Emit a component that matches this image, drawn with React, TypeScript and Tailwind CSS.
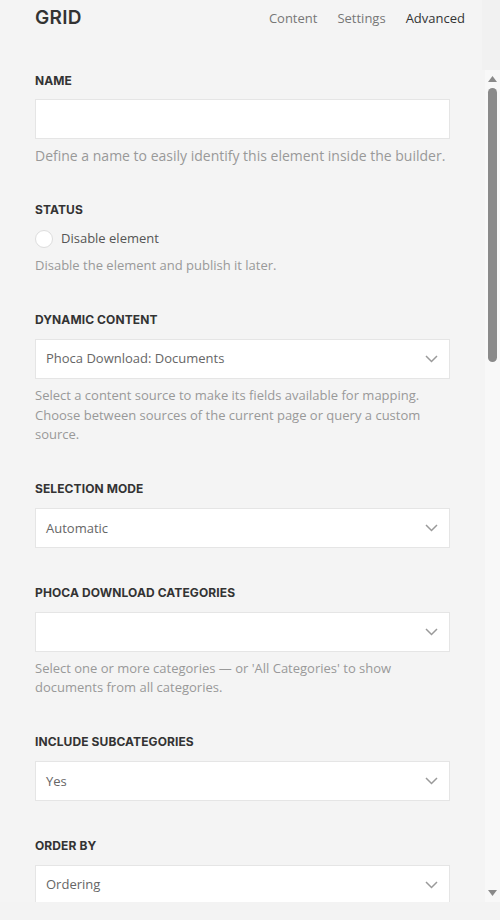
import React from "react";

const labelCls =
  "font-['Inter','Liberation_Sans',sans-serif] font-bold text-[12px] leading-[20px] uppercase text-[#333] tracking-[0.1px]";
const helpCls = "mt-[7px] text-[13px] leading-[19.5px] text-[#999] whitespace-nowrap";

function Chevron() {
  return (
    <svg width="13" height="8" viewBox="0 0 13 8" fill="none">
      <path d="M1 1l5.5 5.5L12 1" stroke="#9a9a9a" strokeWidth="1.5" />
    </svg>
  );
}

function Select({ value }: { value?: string }) {
  return (
    <div className="mt-[9px] h-[40px] w-[415px] bg-white border border-[#e5e5e5] flex items-center justify-between pl-[10px] pr-[11px] shrink-0">
      <span className="text-[13px] text-[#666]">{value}</span>
      <Chevron />
    </div>
  );
}

function Section({ label, children }: { label: string; children: React.ReactNode }) {
  return (
    <div className="flex flex-col shrink-0">
      <div className={labelCls}>{label}</div>
      {children}
    </div>
  );
}

export default function App() {
  return (
    <div className="w-[500px] h-[920px] bg-[#f4f4f4] flex flex-col overflow-hidden font-['Open_Sans','Liberation_Sans',sans-serif]">
      {/* header */}
      <div className="h-[70px] flex shrink-0">
        <div className="w-[482px] h-[37px] flex items-center justify-between pl-[35px] pr-[17px]">
          <h1 className="font-['Inter','Liberation_Sans',sans-serif] font-semibold text-[19px] text-[#333] tracking-[0.3px]">
            GRID
          </h1>
          <nav className="flex gap-[20px] text-[13px]">
            <span className="text-[#777]">Content</span>
            <span className="text-[#777]">Settings</span>
            <span className="text-[#333]">Advanced</span>
          </nav>
        </div>
        <div className="flex-1 bg-[#f1f1f1]" />
      </div>

      {/* body */}
      <div className="h-[832px] flex shrink-0">
        <div className="w-[485px] overflow-hidden pl-[35px] pt-[0.5px] flex flex-col gap-[34.6px]">
          <Section label="Name">
            <div className="mt-[8.5px] h-[40px] w-[415px] bg-white border border-[#e5e5e5] shrink-0" />
            <p className="mt-[7px] text-[14px] leading-[19.5px] text-[#999] whitespace-nowrap">
              Define a name to easily identify this element inside the builder.
            </p>
          </Section>

          <Section label="Status">
            <label className="mt-[9px] h-[20px] flex items-center gap-[8px]">
              <span className="w-[18px] h-[18px] rounded-full border border-[#ddd] bg-white" />
              <span className="text-[13px] text-[#555]">Disable element</span>
            </label>
            <p className={helpCls}>Disable the element and publish it later.</p>
          </Section>

          <Section label="Dynamic Content">
            <Select value="Phoca Download: Documents" />
            <p className={helpCls}>
              Select a content source to make its fields available for mapping.
              <br />
              Choose between sources of the current page or query a custom
              <br />
              source.
            </p>
          </Section>

          <Section label="Selection Mode">
            <Select value="Automatic" />
          </Section>

          <Section label="Phoca Download Categories">
            <Select />
            <p className={helpCls}>
              Select one or more categories — or 'All Categories' to show
              <br />
              documents from all categories.
            </p>
          </Section>

          <Section label="Include Subcategories">
            <Select value="Yes" />
          </Section>

          <Section label="Order By">
            <Select value="Ordering" />
          </Section>
        </div>

        {/* scrollbar */}
        <div className="w-[15px] bg-[#f8f8f8] flex flex-col items-start pl-[3px]">
          <svg className="mt-[6px]" width="9" height="6" viewBox="0 0 9 6">
            <path d="M4.5 0L9 6H0z" fill="#8a8a8a" />
          </svg>
          <div className="mt-[6px] w-[9px] h-[274px] rounded-full bg-[#8a8a8a]" />
          <svg className="mt-auto mb-[6px]" width="9" height="6" viewBox="0 0 9 6">
            <path d="M0 0h9L4.5 6z" fill="#8a8a8a" />
          </svg>
        </div>
      </div>

      <div className="flex-1 bg-[#f3f3f3]" />
    </div>
  );
}
